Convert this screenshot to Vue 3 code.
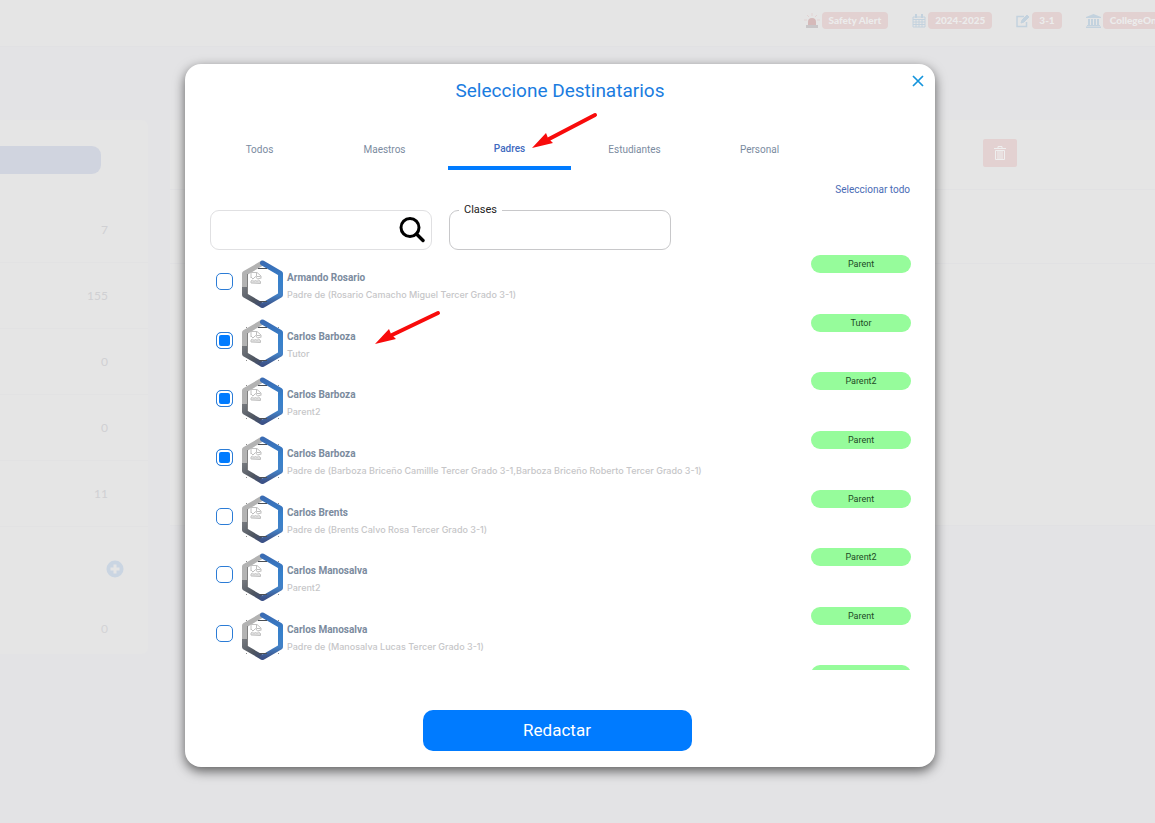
<script setup>
import { ref } from 'vue'

const tabs = ['Todos', 'Maestros', 'Padres', 'Estudiantes', 'Personal']
const active = ref('Padres')
const search = ref('')
const clases = ref('')

const people = ref([
  { name: 'Armando Rosario', note: 'Padre de (Rosario Camacho Miguel Tercer Grado 3-1)', role: 'Parent', on: false },
  { name: 'Carlos Barboza', note: 'Tutor', role: 'Tutor', on: true },
  { name: 'Carlos Barboza', note: 'Parent2', role: 'Parent2', on: true },
  { name: 'Carlos Barboza', note: 'Padre de (Barboza Briceño Camillle Tercer Grado 3-1,Barboza Briceño Roberto Tercer Grado 3-1)', role: 'Parent', on: true },
  { name: 'Carlos Brents', note: 'Padre de (Brents Calvo Rosa Tercer Grado 3-1)', role: 'Parent', on: false },
  { name: 'Carlos Manosalva', note: 'Parent2', role: 'Parent2', on: false },
  { name: 'Carlos Manosalva', note: 'Padre de (Manosalva Lucas Tercer Grado 3-1)', role: 'Parent', on: false },
])
const counts = ['7', '155', '0', '0', '11']
</script>

<template>
  <div class="page">
    <header class="topbar">
      <div class="chip">
        <svg width="16" height="16" viewBox="0 0 16 16"><path d="M4 12V9a4 4 0 0 1 8 0v3z" fill="#d5b9b9" /><path d="M2 12h12v3H2z" fill="#c9c6c8" /><path d="M8 0v3M3 2l2 2M13 2l-2 2M0 7h3M13 7h3" stroke="#e2d3d3" /></svg>
        <span>Safety Alert</span>
      </div>
      <div class="chip">
        <svg width="14" height="14" viewBox="0 0 14 14" fill="none" stroke="#c3d2de"><path d="M1 3h12v10H1zM1 5.500h12M4 5v8M7 5v8M10 5v8M1 8h12M1 10.500h12" /><path d="M4 0v4M10 0v4" stroke-width="2" /></svg>
        <span>2024-2025</span>
      </div>
      <div class="chip">
        <svg width="14" height="14" viewBox="0 0 14 14" fill="none" stroke="#c3d2de"><path d="M10.500 8v4.500H1v-10h7" stroke-width="1.500" /><path d="M5 9l1-3 5-5 2 2-5 5z" fill="#c3d2de" /></svg>
        <span>3-1</span>
      </div>
      <div class="chip">
        <svg width="15" height="14" viewBox="0 0 15 14" fill="#c3d2de"><path d="M7.500 0L15 3v1H0V3zM2 5h2v6H2zM5 5h2v6H5zM8 5h2v6H8zM11 5h2v6h-2zM1 11h13v1H1zM0 12.500h15V14H0z" /></svg>
        <span>CollegeOne</span>
      </div>
    </header>
    <main class="back">
      <aside class="side">
        <div class="pill"></div>
        <p v-for="(c, i) in counts" :key="i" class="count">{{ c }}</p>
        <div class="plus">
          <svg width="18" height="18" viewBox="0 0 18 18"><circle cx="9" cy="9" r="8.500" fill="#cad5e2" /><path d="M9 4.500v9M4.500 9h9" stroke="#e5e5e5" stroke-width="3" /></svg>
        </div>
        <p class="last">0</p>
      </aside>
      <section class="board">
        <div class="tools">
          <button class="trash" aria-label="Eliminar">
            <svg width="12" height="14" viewBox="0 0 12 14" fill="none" stroke="#efefef"><path d="M0 2.500h12M4 2V.5h4V2M1.500 4.500h9v9h-9zM4 5v8M6 5v8M8 5v8" /></svg>
          </button>
        </div>
        <div class="line"></div>
      </section>
    </main>

    <div class="overlay">
      <section class="modal" role="dialog" aria-labelledby="ttl">
        <button class="close" aria-label="Cerrar">
          <svg width="12" height="12" viewBox="0 0 12 12"><path d="M1 1l10 10M11 1L1 11" stroke="#1494dc" stroke-width="1.700" /></svg>
        </button>
        <h1 id="ttl">Seleccione Destinatarios</h1>
        <nav class="tabs">
          <button v-for="t in tabs" :key="t" :class="{ active: t === active }" @click="active = t">{{ t }}</button>
        </nav>
        <div class="all"><a href="#">Seleccionar todo</a></div>
        <div class="filters">
          <div class="search">
            <input v-model="search" type="text" aria-label="Buscar" />
            <svg width="26" height="26" viewBox="0 0 26 26" fill="none" stroke="#000"><circle cx="11" cy="10.500" r="9" stroke-width="3" /><path d="M17.500 17L24 23.500" stroke-width="3.400" stroke-linecap="round" /></svg>
          </div>
          <div class="clases">
            <label for="cl">Clases</label>
            <input id="cl" v-model="clases" type="text" />
          </div>
        </div>
        <div class="scroll">
          <ul>
            <li v-for="(p, i) in people" :key="i">
              <input :id="'p' + i" v-model="p.on" type="checkbox" />
              <svg class="hex" width="41" height="49" viewBox="0 0 41 49" fill="none">
                <defs>
                  <linearGradient :id="'b' + i" x1="0" y1="0" x2="0" y2="1"><stop offset="0" stop-color="#3a6cb4" /><stop offset=".4" stop-color="#3681cc" /><stop offset=".75" stop-color="#4381c6" /><stop offset="1" stop-color="#3c5288" /></linearGradient>
                  <linearGradient :id="'d' + i" x1="0" y1="0" x2="1" y2="1"><stop offset="0" stop-color="#74777c" /><stop offset=".6" stop-color="#4f5661" /><stop offset="1" stop-color="#3c4b73" /></linearGradient>
                </defs>
                <path d="M20.500 3L2.500 13.500V27" stroke="#b3b3b3" stroke-width="5" stroke-linejoin="round" />
                <path d="M2.500 27v8L20.500 45.500" :stroke="'url(#d' + i + ')'" stroke-width="5" stroke-linejoin="round" />
                <path d="M20.500 3l18 10.500V35L20.500 45.500" :stroke="'url(#b' + i + ')'" stroke-width="5" stroke-linejoin="round" stroke-linecap="round" />
                <path d="M16 8.500h9M17 41.500h8" stroke="#4b4f55" />
                <path d="M5.500 14v20" stroke="#808080" />
                <path v-if="i" d="M4 8.500h1M36 8.500h1M4 41.500h1M36 41.500h1" stroke="#8a8a8a" />
                <path d="M9 18v-5.500h6l4 3.500v2.500M14.500 12.500v4h4M9 17l2 2 2.500-2.500 2 2.500 3.500-1M9 23v-2l1.500-1 1.500 1.500 1.500-1.500 1.500 1.500 1.500-1.500 2 1.500v2zM9.500 22h9" stroke="#c0c0c0" />
              </svg>
              <label :for="'p' + i"><strong>{{ p.name }}</strong><small>{{ p.note }}</small></label>
              <span class="role">{{ p.role }}</span>
            </li>
            <li><span class="role"></span></li>
          </ul>
        </div>
        <div class="foot"><button class="write">Redactar</button></div>
        <svg class="arrow one" width="68" height="38" viewBox="0 0 68 38"><path d="M64 3L18 27" stroke="#f80b0b" stroke-width="4" stroke-linecap="round" /><path d="M1 36L15 21l2 5 5 5z" fill="#f80b0b" /></svg>
        <svg class="arrow two" width="68" height="38" viewBox="0 0 68 38"><path d="M64 3L18 25" stroke="#f80b0b" stroke-width="4" stroke-linecap="round" /><path d="M1 34L15 19l2 5 5 5z" fill="#f80b0b" /></svg>
      </section>
    </div>
  </div>
</template>

<style>
html, body { margin: 0; background: #e3e3e5; overflow: hidden; }
</style>

<style scoped>
* { box-sizing: border-box; }
.page { position: relative; min-height: 100vh; overflow: hidden; background: #e3e3e5; font-family: Roboto, "Liberation Sans", sans-serif; }
button { border: 0; background: none; padding: 0; font: inherit; cursor: pointer; }
p, h1, ul { margin: 0; padding: 0; }
.topbar { display: flex; justify-content: flex-end; gap: 24px; height: 47px; padding-top: 12px; margin-right: -14px; background: #e5e5e5; border-bottom: 1px solid #e1e1e3; }
.chip { display: flex; gap: 2px; height: 17px; align-items: center; }
.chip span { height: 17px; padding: 0 7px; border-radius: 4px; background: #e2d1d1; color: #ececec; font: 900 10px/17px Lato, sans-serif; white-space: nowrap; }
.back { display: flex; gap: 22px; padding-top: 73px; }
.side { width: 148px; height: 534px; padding-top: 26px; background: #e5e5e5; border-radius: 0 6px 6px 0; font-family: Lato, sans-serif; }
.pill { width: 101px; height: 28px; margin-bottom: 23px; border-radius: 0 9px 9px 0; background: #d0d4df; }
.count { height: 66px; padding: 24px 40px 0 0; border-bottom: 1px solid #e2e2e3; font-size: 12px; line-height: 18px; text-align: right; color: #d0d0d3; }
.plus { display: flex; justify-content: flex-end; padding: 33px 24px 0 0; }
.last { padding: 42px 40px 0 0; font-size: 12px; line-height: 18px; text-align: right; color: #d3d3d5; }
.board { flex: 1; height: 406px; background: #e5e5e5; border-bottom: 1px solid #e1e1e3; }
.tools { height: 70px; padding: 19px 138px 0 0; text-align: right; border-bottom: 1px solid #e1e1e3; }
.trash { width: 34px; height: 28px; border-radius: 2px; background: #e3d1d1; }
.trash svg { display: block; margin: 0 auto; }
.line { height: 74px; border-bottom: 1px solid #e1e1e3; }
.overlay { position: absolute; inset: 0; display: flex; justify-content: center; align-items: flex-start; padding: 64px 35px 0 0; }
.modal { position: relative; width: 750px; max-width: 100%; padding-bottom: 16px; border-radius: 16px; background: #fff; box-shadow: 0 4px 12px rgba(0, 0, 0, .6); }
.close { position: absolute; top: 11px; right: 11px; width: 12px; height: 12px; }
.close svg { display: block; }
h1 { padding-top: 13px; font-size: 19px; line-height: 28px; font-weight: 400; text-align: center; color: #1a7ce0; }
.tabs { display: grid; grid-template-columns: repeat(5, 1fr); gap: 2px; padding: 23px 114px 0 13px; }
.tabs button { height: 42px; padding-top: 5px; border-bottom: 4px solid transparent; font-size: 10px; line-height: 14px; color: #7b8ba0; }
.tabs .active { padding-top: 3px; border-color: #007bff; color: #3e6ac0; font-weight: 500; }
.all { padding: 13px 25px 0 0; text-align: right; font-size: 10px; line-height: 14px; }
.all a { color: #4a6bb5; text-decoration: none; }
.filters { display: flex; gap: 17px; padding: 13px 25px 0; }
.search, .clases { position: relative; width: 222px; height: 40px; }
.search input, .clases input { width: 100%; height: 40px; padding: 0 10px; border: 1px solid #e0e0e2; border-radius: 9px; background: #fff; outline: 0; }
.clases input { border-color: #c8c8ca; }
.search svg { position: absolute; right: 7px; top: 7px; }
.clases label { position: absolute; left: 10px; top: -7px; padding: 0 5px; background: #fff; font-size: 11px; line-height: 14px; color: #222; }
.scroll { height: 415px; margin-top: 5px; padding: 0 24px 0 31px; overflow: hidden; }
ul { display: grid; grid-template-rows: repeat(8, 1fr); height: 469px; list-style: none; }
li { display: flex; align-items: flex-start; }
li input { appearance: none; flex: none; width: 17px; height: 17px; margin: 18px 9px 0 0; border: 1px solid #2b7cd6; border-radius: 5px; background: #fff; }
li input:checked { background: #007bff; box-shadow: inset 0 0 0 2px #fff; }
.hex { flex: none; margin: 5px 4px 0 0; }
label strong, label small { display: block; white-space: nowrap; }
li label { padding-top: 14px; }
strong { font-size: 10px; line-height: 17px; font-weight: 700; color: #7b8b9e; }
small { font-family: Inter, sans-serif; font-size: 9px; line-height: 17px; font-weight: 500; color: #c6c6c8; }
.role { width: 100px; height: 18px; margin-left: auto; border-radius: 9px; background: #96fc9b; font-size: 9px; line-height: 18px; text-align: center; color: #1d4a26; }
.foot { display: flex; justify-content: center; padding: 40px 6px 0 0; }
.write { width: 269px; height: 41px; border-radius: 10px; background: #007bff; color: #fff; font-size: 17px; line-height: 41px; }
.arrow { position: absolute; pointer-events: none; }
.one { left: 346px; top: 48px; }
.two { left: 189px; top: 246px; }
</style>
